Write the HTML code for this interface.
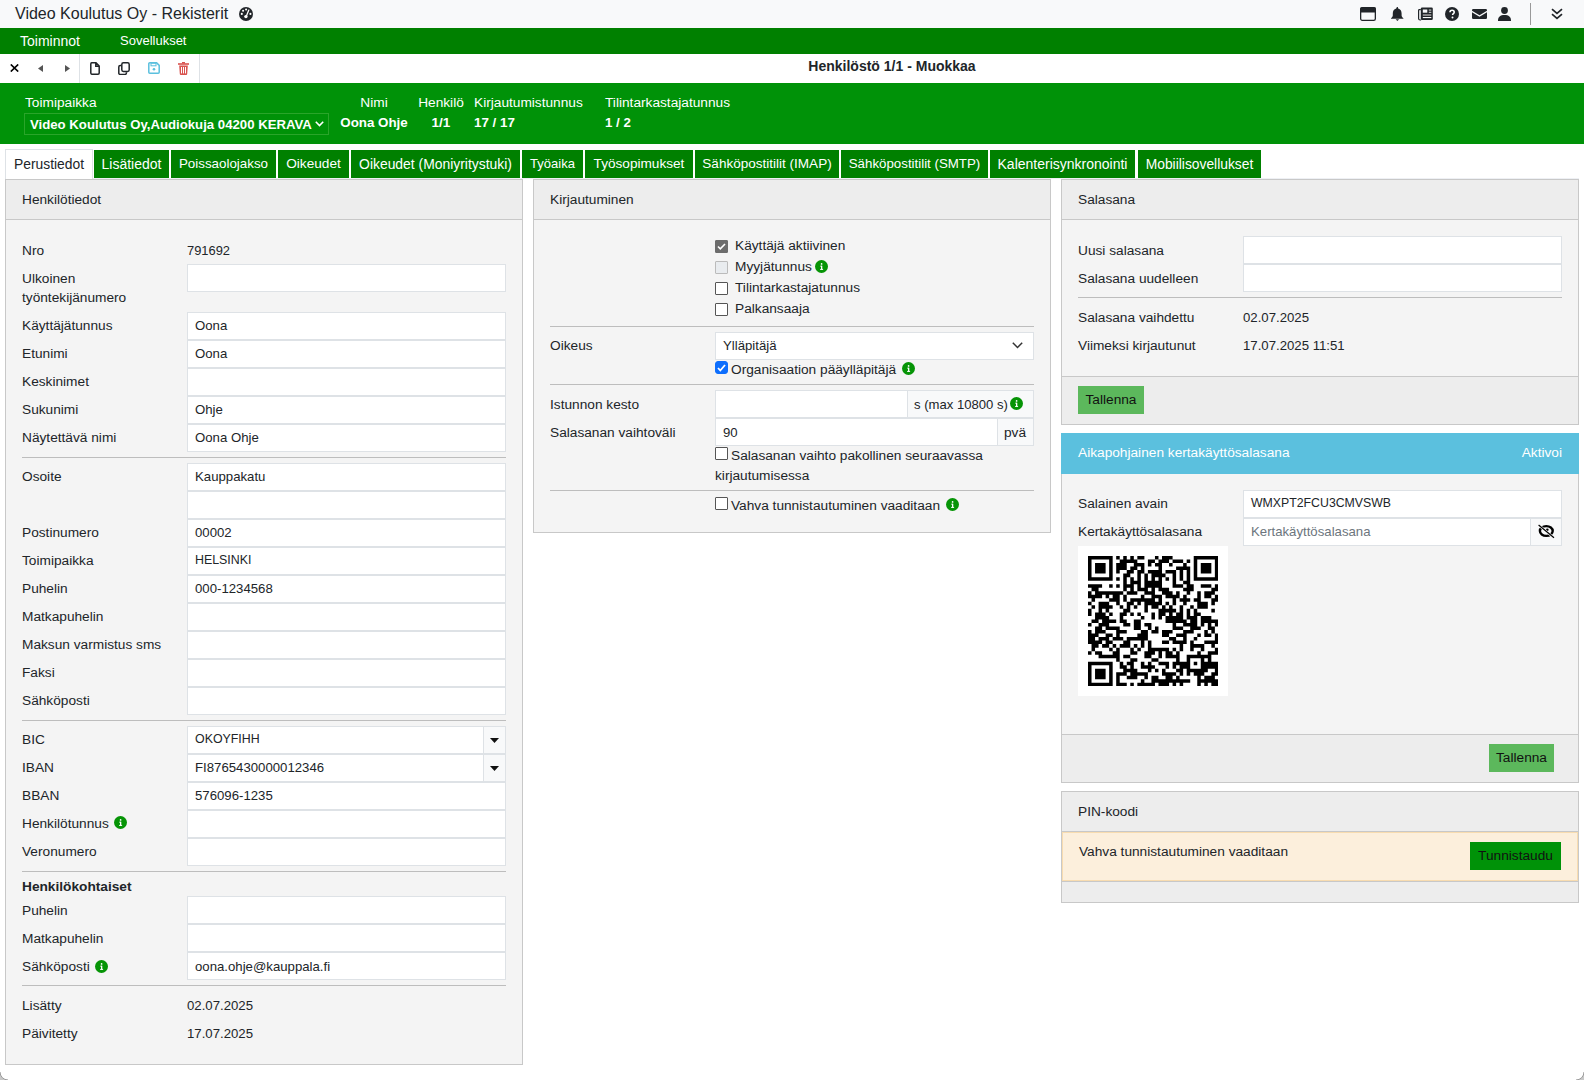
<!DOCTYPE html><html><head><meta charset="utf-8"><style>
*{box-sizing:border-box;margin:0;padding:0}
html,body{width:1584px;height:1080px;overflow:hidden;background:#fff}
body{position:relative;font-family:"Liberation Sans",sans-serif;font-size:13.7px;color:#212529}
.v{font-size:13.2px}
.ab{position:absolute}
.t{position:absolute;white-space:nowrap;line-height:19px}
.inp{position:absolute;background:#fff;border:1px solid #dee2e6;height:28px}
.hr{position:absolute;height:1px;background:#bdbdbd}
.panel{position:absolute;background:#f4f4f4;border:1px solid #c8c8c8}
.ph{position:absolute;left:0;right:0;top:0;height:40px;background:#ededed;border-bottom:1px solid #c8c8c8}
.tab{position:absolute;top:150px;height:28px;background:#008000;color:#fff;text-align:center;line-height:28px;white-space:nowrap}
.cb{position:absolute;width:13px;height:13px;border:1px solid #555;background:#fff;border-radius:1px}
.info{position:absolute;width:13px;height:13px}

</style></head><body>
<div class="ab" style="left:0;top:0;width:1584px;height:28px;background:#f8f9fa"></div>
<div class="t" style="left:15px;top:0;line-height:28px;font-size:16px">Video Koulutus Oy - Rekisterit</div>
<svg class="ab" style="left:239px;top:7px" width="14" height="14" viewBox="0 0 14 14">
<circle cx="7" cy="7" r="7" fill="#212529"/>
<circle cx="2.8" cy="6.9" r="1.05" fill="#fff"/><circle cx="4.1" cy="3.8" r="1.05" fill="#fff"/><circle cx="7.1" cy="2.5" r="1.05" fill="#fff"/><circle cx="11.4" cy="6.9" r="1.05" fill="#fff"/>
<path d="M9.8 3.1L7.4 9" stroke="#fff" stroke-width="1.3" stroke-linecap="round"/><circle cx="6.9" cy="9.6" r="1.7" fill="#fff"/>
</svg>
<svg class="ab" style="left:1360px;top:7px" width="16" height="14" viewBox="0 0 16 14">
<rect x="0.65" y="0.65" width="14.7" height="12.7" rx="1.6" fill="none" stroke="#212529" stroke-width="1.3"/><path d="M1.6 0.2h12.8a1.4 1.4 0 0 1 1.4 1.4V5.6H0.2V1.6A1.4 1.4 0 0 1 1.6 0.2z" fill="#212529"/></svg>
<svg class="ab" style="left:1391px;top:7px" width="13" height="14" viewBox="0 0 13 14">
<path d="M5.9 0.1h0.9l0.4 1.3c2.3 0.6 3.4 2.6 3.4 5v2.1c0 1.1 1 2 1.8 2.7v0.6H0v-0.6c0.8-0.7 1.8-1.6 1.8-2.7V6.4c0-2.4 1.1-4.4 3.4-5z" fill="#212529"/><path d="M4.6 12.2h3.5L6.35 14z" fill="#212529"/></svg>
<svg class="ab" style="left:1418px;top:7px" width="15" height="14" viewBox="0 0 15 14">
<rect x="2.8" y="0.4" width="12" height="12.6" rx="1.3" fill="#212529"/><path d="M2.8 2.6H1.4a0.8 0.8 0 0 0-0.8 0.8v8.1a1.5 1.5 0 0 0 1.5 1.5h1" fill="none" stroke="#212529" stroke-width="1.2"/>
<rect x="4.8" y="2.5" width="4.5" height="3.2" fill="#f8f9fa"/><rect x="10.8" y="2.6" width="2.5" height="0.9" fill="#f8f9fa"/><rect x="10.8" y="4.8" width="2.5" height="0.9" fill="#f8f9fa"/><rect x="4.8" y="7.1" width="8.5" height="1.9" fill="#8a8a8a"/><rect x="4.8" y="10" width="8.5" height="1.1" fill="#f8f9fa"/></svg>
<svg class="ab" style="left:1445px;top:7px" width="14" height="14" viewBox="0 0 14 14">
<circle cx="7" cy="7" r="7" fill="#212529"/><path d="M5 5.3c0-1.2 0.9-2 2.1-2 1.2 0 2.1 0.8 2.1 1.9 0 1.4-1.6 1.5-1.6 2.7v0.2" fill="none" stroke="#fff" stroke-width="1.6"/><circle cx="7.5" cy="10.4" r="1" fill="#fff"/></svg>
<svg class="ab" style="left:1472px;top:9px" width="15" height="10" viewBox="0 0 15 10">
<path d="M0 1.2A1.2 1.2 0 0 1 1.2 0h12.6A1.2 1.2 0 0 1 15 1.2v0.6L7.5 6.3 0 1.8z" fill="#212529"/><path d="M0 3.2l7.5 4.5 7.5-4.5v5.6A1.2 1.2 0 0 1 13.8 10H1.2A1.2 1.2 0 0 1 0 8.8z" fill="#212529"/></svg>
<svg class="ab" style="left:1498px;top:7px" width="13" height="14" viewBox="0 0 13 14">
<circle cx="6.5" cy="3.5" r="3.4" fill="#212529"/><path d="M0 13.2c0-3.3 2.2-5.3 6.5-5.3s6.5 2 6.5 5.3v0.8H0z" fill="#212529"/></svg>
<div class="ab" style="left:1530px;top:3px;width:1px;height:22px;background:#999"></div>
<svg class="ab" style="left:1551px;top:8px" width="12" height="12" viewBox="0 0 12 12">
<path d="M1 1.2l5 4.3 5-4.3M1 6.2l5 4.3 5-4.3" fill="none" stroke="#212529" stroke-width="1.7"/></svg>
<div class="ab" style="left:0;top:28px;width:1584px;height:26px;background:#008000"></div>
<div class="t" style="left:20px;top:28px;line-height:26px;color:#fff;font-size:14px">Toiminnot</div>
<div class="t" style="left:120px;top:28px;line-height:26px;color:#fff;font-size:13px">Sovellukset</div>
<div class="ab" style="left:79px;top:54px;width:1px;height:29px;background:#dee2e6"></div>
<div class="ab" style="left:199px;top:54px;width:1px;height:29px;background:#dee2e6"></div>
<svg class="ab" style="left:10px;top:64px" width="9" height="8" viewBox="0 0 9 8"><path d="M0.8 0.5L8.2 7.5M8.2 0.5L0.8 7.5" stroke="#000" stroke-width="1.7"/></svg>
<svg class="ab" style="left:38px;top:65px" width="5" height="7" viewBox="0 0 5 7"><path d="M5 0V7L0 3.5z" fill="#555"/></svg>
<svg class="ab" style="left:65px;top:65px" width="5" height="7" viewBox="0 0 5 7"><path d="M0 0V7L5 3.5z" fill="#555"/></svg>
<svg class="ab" style="left:90px;top:62px" width="10" height="13" viewBox="0 0 10 13"><path d="M1.8 0.8h4.2l3.2 3.2v7a1.2 1.2 0 0 1-1.2 1.2H1.8A1.2 1.2 0 0 1 0.8 11V2a1.2 1.2 0 0 1 1-1.2z M5.8 0.8v3.4h3.4" fill="none" stroke="#212529" stroke-width="1.5"/></svg>
<svg class="ab" style="left:118px;top:62px" width="12" height="13" viewBox="0 0 12 13"><rect x="3.8" y="0.8" width="7.4" height="8.6" rx="1.6" fill="none" stroke="#212529" stroke-width="1.5"/><path d="M3 3.6H2.2A1.4 1.4 0 0 0 0.8 5v6.2a1.2 1.2 0 0 0 1.2 1.2h5a1.4 1.4 0 0 0 1.4-1.4v-0.8" fill="none" stroke="#212529" stroke-width="1.5"/></svg>
<svg class="ab" style="left:148px;top:62px" width="12" height="12" viewBox="0 0 12 12"><path d="M1.8 0.8h6.8l2.6 2.6v6.8a1 1 0 0 1-1 1H1.8a1 1 0 0 1-1-1V1.8a1 1 0 0 1 1-1z" fill="none" stroke="#5bc0de" stroke-width="1.5"/><rect x="3" y="1.2" width="5" height="2.6" fill="none" stroke="#5bc0de" stroke-width="1"/><circle cx="6" cy="7.2" r="1.3" fill="#5bc0de"/></svg>
<svg class="ab" style="left:178px;top:62px" width="11" height="13" viewBox="0 0 11 13"><rect x="0" y="1.2" width="11" height="1.6" fill="#d9534f"/><rect x="4" y="0" width="3" height="1.5" fill="#d9534f"/><path d="M1.2 3.6h8.6l-0.6 8.4a1 1 0 0 1-1 0.9H2.8a1 1 0 0 1-1-0.9z" fill="#d9534f"/><rect x="3" y="5" width="1" height="6.4" fill="#fff"/><rect x="5" y="5" width="1" height="6.4" fill="#fff"/><rect x="7" y="5" width="1" height="6.4" fill="#fff"/></svg>
<div class="t" style="left:200px;width:1384px;top:53px;line-height:26px;text-align:center;font-weight:bold;color:#212529;font-size:14px">Henkilöstö 1/1 - Muokkaa</div>
<div class="ab" style="left:0;top:83px;width:1584px;height:61px;background:#009208"></div>
<div class="t" style="left:25px;top:93px;color:#fff">Toimipaikka</div>
<div class="ab" style="left:24px;top:113px;width:305px;height:22px;border:1px solid #2aa52a"></div>
<div class="t" style="left:30px;top:115px;color:#fff;font-weight:bold;font-size:13.2px">Video Koulutus Oy,Audiokuja 04200 KERAVA</div>
<svg class="ab" style="left:315px;top:121px" width="9" height="6" viewBox="0 0 9 6"><path d="M0.8 0.8l3.7 3.7 3.7-3.7" fill="none" stroke="#fff" stroke-width="1.6"/></svg>
<div class="t" style="left:340px;width:68px;text-align:center;top:93px;color:#fff">Nimi</div>
<div class="t" style="left:340px;width:68px;text-align:center;top:113px;color:#fff;font-weight:bold;font-size:13.35px">Oona Ohje</div>
<div class="t" style="left:418px;width:46px;text-align:center;top:93px;color:#fff">Henkilö</div>
<div class="t" style="left:418px;width:46px;text-align:center;top:113px;color:#fff;font-weight:bold;font-size:13.5px">1/1</div>
<div class="t" style="left:474px;top:93px;color:#fff">Kirjautumistunnus</div>
<div class="t" style="left:474px;top:113px;color:#fff;font-weight:bold;font-size:13.35px">17 / 17</div>
<div class="t" style="left:605px;top:93px;color:#fff">Tilintarkastajatunnus</div>
<div class="t" style="left:605px;top:113px;color:#fff;font-weight:bold;font-size:13.3px">1 / 2</div>
<div class="ab" style="left:5px;top:149px;width:88px;height:30px;background:#fff;border:1px solid #dee2e6;border-bottom:none"></div>
<div class="t" style="left:5px;width:88px;top:149px;line-height:30px;text-align:center;color:#212529;font-size:13.85px">Perustiedot</div>
<div class="tab" style="left:94px;width:75px;font-size:13.97px">Lisätiedot</div>
<div class="tab" style="left:171px;width:105px;font-size:13.37px">Poissaolojakso</div>
<div class="tab" style="left:278px;width:71px;font-size:13.64px">Oikeudet</div>
<div class="tab" style="left:351px;width:169px;font-size:13.9px">Oikeudet (Moniyritystuki)</div>
<div class="tab" style="left:522px;width:61px;font-size:13.0px">Työaika</div>
<div class="tab" style="left:585px;width:108px;font-size:13.61px">Työsopimukset</div>
<div class="tab" style="left:695px;width:144px;font-size:13.54px">Sähköpostitilit (IMAP)</div>
<div class="tab" style="left:841px;width:147px;font-size:13.31px">Sähköpostitilit (SMTP)</div>
<div class="tab" style="left:990px;width:145px;font-size:14.0px">Kalenterisynkronointi</div>
<div class="tab" style="left:1138px;width:123px;font-size:13.83px">Mobiilisovellukset</div>
<div class="ab" style="left:93px;top:178px;width:1486px;height:1px;background:#eef0f4"></div>
<div class="panel" style="left:5px;top:179px;width:518px;height:886px"><div class="ph" style=""></div></div>
<div class="t" style="left:22px;top:190px;line-height:20px">Henkilötiedot</div>
<div class="t" style="left:22px;top:241px;">Nro</div>
<div class="t" style="left:187px;top:241px;font-size:12.9px">791692</div>
<div class="t" style="left:22px;top:269px">Ulkoinen<br>työntekijänumero</div>
<div class="inp" style="left:187px;top:264px;width:319px;"></div>
<div class="t" style="left:22px;top:316px;">Käyttäjätunnus</div>
<div class="inp" style="left:187px;top:312px;width:319px;"></div>
<div class="t v" style="left:195px;top:316px;">Oona</div>
<div class="t" style="left:22px;top:344px;">Etunimi</div>
<div class="inp" style="left:187px;top:340px;width:319px;"></div>
<div class="t v" style="left:195px;top:344px;">Oona</div>
<div class="t" style="left:22px;top:372px;">Keskinimet</div>
<div class="inp" style="left:187px;top:368px;width:319px;"></div>
<div class="t" style="left:22px;top:400px;">Sukunimi</div>
<div class="inp" style="left:187px;top:396px;width:319px;"></div>
<div class="t v" style="left:195px;top:400px;">Ohje</div>
<div class="t" style="left:22px;top:428px;">Näytettävä nimi</div>
<div class="inp" style="left:187px;top:424px;width:319px;"></div>
<div class="t v" style="left:195px;top:428px;">Oona Ohje</div>
<div class="hr" style="left:22px;top:457px;width:484px"></div>
<div class="t" style="left:22px;top:467px;">Osoite</div>
<div class="inp" style="left:187px;top:463px;width:319px;"></div>
<div class="t v" style="left:195px;top:467px;">Kauppakatu</div>
<div class="inp" style="left:187px;top:491px;width:319px;"></div>
<div class="t" style="left:22px;top:523px;">Postinumero</div>
<div class="inp" style="left:187px;top:519px;width:319px;"></div>
<div class="t v" style="left:195px;top:523px;">00002</div>
<div class="t" style="left:22px;top:551px;">Toimipaikka</div>
<div class="inp" style="left:187px;top:547px;width:319px;"></div>
<div class="t v" style="left:195px;top:551px;font-size:12.4px">HELSINKI</div>
<div class="t" style="left:22px;top:579px;">Puhelin</div>
<div class="inp" style="left:187px;top:575px;width:319px;"></div>
<div class="t v" style="left:195px;top:579px;">000-1234568</div>
<div class="t" style="left:22px;top:607px;">Matkapuhelin</div>
<div class="inp" style="left:187px;top:603px;width:319px;"></div>
<div class="t" style="left:22px;top:635px;">Maksun varmistus sms</div>
<div class="inp" style="left:187px;top:631px;width:319px;"></div>
<div class="t" style="left:22px;top:663px;">Faksi</div>
<div class="inp" style="left:187px;top:659px;width:319px;"></div>
<div class="t" style="left:22px;top:691px;">Sähköposti</div>
<div class="inp" style="left:187px;top:687px;width:319px;"></div>
<div class="hr" style="left:22px;top:720px;width:484px"></div>
<div class="t" style="left:22px;top:730px;">BIC</div>
<div class="inp" style="left:187px;top:726px;width:319px;"></div>
<div class="t v" style="left:195px;top:730px;font-size:12.4px">OKOYFIHH</div>
<div class="ab" style="left:483px;top:726px;width:23px;height:28px;background:#f8f9fa;border:1px solid #dee2e6"></div>
<svg class="ab" style="left:490px;top:738px" width="9" height="5" viewBox="0 0 9 5"><path d="M0 0h9L4.5 5z" fill="#111"/></svg>
<div class="t" style="left:22px;top:758px;">IBAN</div>
<div class="inp" style="left:187px;top:754px;width:319px;"></div>
<div class="t v" style="left:195px;top:758px;">FI8765430000012346</div>
<div class="ab" style="left:483px;top:754px;width:23px;height:28px;background:#f8f9fa;border:1px solid #dee2e6"></div>
<svg class="ab" style="left:490px;top:766px" width="9" height="5" viewBox="0 0 9 5"><path d="M0 0h9L4.5 5z" fill="#111"/></svg>
<div class="t" style="left:22px;top:786px;">BBAN</div>
<div class="inp" style="left:187px;top:782px;width:319px;"></div>
<div class="t v" style="left:195px;top:786px;">576096-1235</div>
<div class="t" style="left:22px;top:814px;">Henkilötunnus</div>
<svg class="info" style="left:114px;top:816px" viewBox="0 0 13 13"><circle cx="6.5" cy="6.5" r="6.5" fill="#069406"/><rect x="6" y="5.7" width="1.3" height="3.8" fill="#fff"/><rect x="5.2" y="5.7" width="1.4" height="0.9" fill="#fff"/><rect x="5.1" y="8.9" width="3" height="1" fill="#fff"/><circle cx="6.6" cy="3.9" r="0.85" fill="#fff"/></svg>
<div class="inp" style="left:187px;top:810px;width:319px;"></div>
<div class="t" style="left:22px;top:842px;">Veronumero</div>
<div class="inp" style="left:187px;top:838px;width:319px;"></div>
<div class="hr" style="left:22px;top:871px;width:484px"></div>
<div class="t" style="left:22px;top:877px;font-weight:bold">Henkilökohtaiset</div>
<div class="t" style="left:22px;top:901px;">Puhelin</div>
<div class="inp" style="left:187px;top:896px;width:319px;"></div>
<div class="t" style="left:22px;top:929px;">Matkapuhelin</div>
<div class="inp" style="left:187px;top:924px;width:319px;"></div>
<div class="t" style="left:22px;top:957px;">Sähköposti</div>
<svg class="info" style="left:95px;top:960px" viewBox="0 0 13 13"><circle cx="6.5" cy="6.5" r="6.5" fill="#069406"/><rect x="6" y="5.7" width="1.3" height="3.8" fill="#fff"/><rect x="5.2" y="5.7" width="1.4" height="0.9" fill="#fff"/><rect x="5.1" y="8.9" width="3" height="1" fill="#fff"/><circle cx="6.6" cy="3.9" r="0.85" fill="#fff"/></svg>
<div class="inp" style="left:187px;top:952px;width:319px;"></div>
<div class="t v" style="left:195px;top:957px;">oona.ohje@kauppala.fi</div>
<div class="hr" style="left:22px;top:985px;width:484px"></div>
<div class="t" style="left:22px;top:996px;">Lisätty</div>
<div class="t" style="left:187px;top:996px;font-size:13.2px">02.07.2025</div>
<div class="t" style="left:22px;top:1024px;">Päivitetty</div>
<div class="t" style="left:187px;top:1024px;font-size:13.2px">17.07.2025</div>
<div class="panel" style="left:533px;top:179px;width:518px;height:354px"><div class="ph" style=""></div></div>
<div class="t" style="left:550px;top:190px;line-height:20px">Kirjautuminen</div>
<div class="cb" style="left:715px;top:240px;background:#6c6c6c;border-color:#6c6c6c"></div>
<svg class="ab" style="left:717px;top:243px" width="9" height="7" viewBox="0 0 9 7"><path d="M1 3.5l2.3 2.3L8 1" fill="none" stroke="#fff" stroke-width="1.6"/></svg>
<div class="t" style="left:735px;top:235px;line-height:21px">Käyttäjä aktiivinen</div>
<div class="cb" style="left:715px;top:261px;background:#e9ecef;border-color:#bbb"></div>
<div class="t" style="left:735px;top:256px;line-height:21px">Myyjätunnus</div>
<svg class="info" style="left:815px;top:260px" viewBox="0 0 13 13"><circle cx="6.5" cy="6.5" r="6.5" fill="#069406"/><rect x="6" y="5.7" width="1.3" height="3.8" fill="#fff"/><rect x="5.2" y="5.7" width="1.4" height="0.9" fill="#fff"/><rect x="5.1" y="8.9" width="3" height="1" fill="#fff"/><circle cx="6.6" cy="3.9" r="0.85" fill="#fff"/></svg>
<div class="cb" style="left:715px;top:282px"></div>
<div class="t" style="left:735px;top:277px;line-height:21px">Tilintarkastajatunnus</div>
<div class="cb" style="left:715px;top:303px"></div>
<div class="t" style="left:735px;top:298px;line-height:21px">Palkansaaja</div>
<div class="hr" style="left:550px;top:326px;width:484px"></div>
<div class="t" style="left:550px;top:336px;">Oikeus</div>
<div class="inp" style="left:715px;top:332px;width:319px;"></div>
<div class="t v" style="left:723px;top:336px;">Ylläpitäjä</div>
<svg class="ab" style="left:1012px;top:342px" width="11" height="7" viewBox="0 0 11 7"><path d="M0.8 0.8l4.7 4.7 4.7-4.7" fill="none" stroke="#333" stroke-width="1.5"/></svg>
<div class="cb" style="left:715px;top:361px;background:#0d6efd;border-color:#0d6efd;border-radius:3px"></div>
<svg class="ab" style="left:717px;top:364px" width="9" height="8" viewBox="0 0 9 8"><path d="M1 4l2.3 2.5L8 1" fill="none" stroke="#fff" stroke-width="1.8"/></svg>
<div class="t" style="left:731px;top:360px">Organisaation pääylläpitäjä</div>
<svg class="info" style="left:902px;top:362px" viewBox="0 0 13 13"><circle cx="6.5" cy="6.5" r="6.5" fill="#069406"/><rect x="6" y="5.7" width="1.3" height="3.8" fill="#fff"/><rect x="5.2" y="5.7" width="1.4" height="0.9" fill="#fff"/><rect x="5.1" y="8.9" width="3" height="1" fill="#fff"/><circle cx="6.6" cy="3.9" r="0.85" fill="#fff"/></svg>
<div class="hr" style="left:550px;top:384px;width:484px"></div>
<div class="t" style="left:550px;top:395px;">Istunnon kesto</div>
<div class="inp" style="left:715px;top:390px;width:319px;"></div>
<div class="ab" style="left:907px;top:390px;width:127px;height:28px;background:#f8f9fa;border:1px solid #dee2e6"></div>
<div class="t" style="left:914px;top:395px;font-size:13.1px">s (max 10800 s)</div>
<svg class="info" style="left:1010px;top:397px" viewBox="0 0 13 13"><circle cx="6.5" cy="6.5" r="6.5" fill="#069406"/><rect x="6" y="5.7" width="1.3" height="3.8" fill="#fff"/><rect x="5.2" y="5.7" width="1.4" height="0.9" fill="#fff"/><rect x="5.1" y="8.9" width="3" height="1" fill="#fff"/><circle cx="6.6" cy="3.9" r="0.85" fill="#fff"/></svg>
<div class="t" style="left:550px;top:423px;">Salasanan vaihtoväli</div>
<div class="inp" style="left:715px;top:418px;width:319px;"></div>
<div class="t v" style="left:723px;top:423px;">90</div>
<div class="ab" style="left:997px;top:418px;width:37px;height:28px;background:#f8f9fa;border:1px solid #dee2e6"></div>
<div class="t" style="left:1004px;top:423px">pvä</div>
<div class="cb" style="left:715px;top:447px"></div>
<div class="t" style="left:731px;top:446px;line-height:20px">Salasanan vaihto pakollinen seuraavassa</div>
<div class="t" style="left:715px;top:466px;line-height:20px">kirjautumisessa</div>
<div class="hr" style="left:550px;top:490px;width:484px"></div>
<div class="cb" style="left:715px;top:497px"></div>
<div class="t" style="left:731px;top:496px;line-height:20px">Vahva tunnistautuminen vaaditaan</div>
<svg class="info" style="left:946px;top:498px" viewBox="0 0 13 13"><circle cx="6.5" cy="6.5" r="6.5" fill="#069406"/><rect x="6" y="5.7" width="1.3" height="3.8" fill="#fff"/><rect x="5.2" y="5.7" width="1.4" height="0.9" fill="#fff"/><rect x="5.1" y="8.9" width="3" height="1" fill="#fff"/><circle cx="6.6" cy="3.9" r="0.85" fill="#fff"/></svg>
<div class="panel" style="left:1061px;top:179px;width:518px;height:246px"><div class="ph" style=""></div></div>
<div class="t" style="left:1078px;top:190px;line-height:20px">Salasana</div>
<div class="t" style="left:1078px;top:241px;">Uusi salasana</div>
<div class="inp" style="left:1243px;top:236px;width:319px;"></div>
<div class="t" style="left:1078px;top:269px;">Salasana uudelleen</div>
<div class="inp" style="left:1243px;top:264px;width:319px;"></div>
<div class="hr" style="left:1078px;top:297px;width:484px"></div>
<div class="t" style="left:1078px;top:308px;">Salasana vaihdettu</div>
<div class="t" style="left:1243px;top:308px;font-size:13.2px">02.07.2025</div>
<div class="t" style="left:1078px;top:336px;">Viimeksi kirjautunut</div>
<div class="t" style="left:1243px;top:336px;font-size:13.2px">17.07.2025 11:51</div>
<div class="ab" style="left:1062px;top:376px;width:516px;height:48px;background:#ededed;border-top:1px solid #c8c8c8"></div>
<div class="ab" style="left:1078px;top:386px;width:66px;height:28px;background:#5cb85c"></div>
<div class="t" style="left:1078px;width:66px;text-align:center;top:386px;line-height:28px;color:#111">Tallenna</div>
<div class="panel" style="left:1061px;top:433px;width:518px;height:350px"><div class="ph" style="background:#5bc0de;border-bottom:1px solid #5bc0de"></div></div>
<div class="ab" style="left:1061px;top:433px;width:518px;height:41px;background:#5bc0de"></div>
<div class="t" style="left:1078px;top:443px;line-height:20px;color:#fff">Aikapohjainen kertakäyttösalasana</div>
<div class="t" style="left:1400px;width:162px;text-align:right;top:443px;line-height:20px;color:#fff">Aktivoi</div>
<div class="t" style="left:1078px;top:494px;">Salainen avain</div>
<div class="inp" style="left:1243px;top:490px;width:319px;"></div>
<div class="t v" style="left:1251px;top:494px;font-size:12.3px">WMXPT2FCU3CMVSWB</div>
<div class="t" style="left:1078px;top:522px;">Kertakäyttösalasana</div>
<div class="inp" style="left:1243px;top:518px;width:319px;"></div>
<div class="t v" style="left:1251px;top:522px;color:#6c757d">Kertakäyttösalasana</div>
<div class="ab" style="left:1530px;top:518px;width:32px;height:28px;background:#f8f9fa;border:1px solid #dee2e6"></div>
<svg class="ab" style="left:1537px;top:524px" width="18" height="15" viewBox="0 0 18 15"><ellipse cx="9.3" cy="7" rx="6.4" ry="4.9" fill="none" stroke="#000" stroke-width="2.4"/><circle cx="10.3" cy="5.8" r="1.3" fill="#000"/><path d="M1.6 1L17 13.8" stroke="#f8f9fa" stroke-width="2.4"/><path d="M1.6 1L17 13.8" stroke="#000" stroke-width="1.2"/></svg>
<div class="ab" style="left:1078px;top:546px;width:150px;height:150px;background:#fff"></div>
<svg class="ab" style="left:1087.8px;top:555.5px" width="130.4" height="130.4" viewBox="0 0 37 37"><path d="M0 0h7v1h-7zM8 0h1v1h-1zM10 0h1v1h-1zM12 0h1v1h-1zM14 0h2v1h-2zM19 0h1v1h-1zM21 0h3v1h-3zM30 0h7v1h-7zM0 1h1v1h-1zM6 1h1v1h-1zM9 1h5v1h-5zM17 1h2v1h-2zM20 1h3v1h-3zM24 1h3v1h-3zM28 1h1v1h-1zM30 1h1v1h-1zM36 1h1v1h-1zM0 2h1v1h-1zM2 2h3v1h-3zM6 2h1v1h-1zM8 2h3v1h-3zM13 2h3v1h-3zM17 2h1v1h-1zM19 2h2v1h-2zM23 2h1v1h-1zM27 2h1v1h-1zM30 2h1v1h-1zM32 2h3v1h-3zM36 2h1v1h-1zM0 3h1v1h-1zM2 3h3v1h-3zM6 3h1v1h-1zM8 3h3v1h-3zM12 3h2v1h-2zM15 3h1v1h-1zM20 3h1v1h-1zM25 3h4v1h-4zM30 3h1v1h-1zM32 3h3v1h-3zM36 3h1v1h-1zM0 4h1v1h-1zM2 4h3v1h-3zM6 4h1v1h-1zM8 4h1v1h-1zM11 4h2v1h-2zM14 4h2v1h-2zM17 4h4v1h-4zM22 4h3v1h-3zM26 4h1v1h-1zM28 4h1v1h-1zM30 4h1v1h-1zM32 4h3v1h-3zM36 4h1v1h-1zM0 5h1v1h-1zM6 5h1v1h-1zM10 5h2v1h-2zM14 5h1v1h-1zM16 5h1v1h-1zM18 5h4v1h-4zM24 5h1v1h-1zM26 5h1v1h-1zM28 5h1v1h-1zM30 5h1v1h-1zM36 5h1v1h-1zM0 6h7v1h-7zM8 6h1v1h-1zM10 6h1v1h-1zM12 6h1v1h-1zM14 6h1v1h-1zM16 6h1v1h-1zM18 6h1v1h-1zM20 6h1v1h-1zM22 6h1v1h-1zM24 6h1v1h-1zM26 6h1v1h-1zM28 6h1v1h-1zM30 6h7v1h-7zM10 7h1v1h-1zM12 7h3v1h-3zM16 7h5v1h-5zM24 7h1v1h-1zM27 7h2v1h-2zM0 8h4v1h-4zM6 8h1v1h-1zM8 8h1v1h-1zM10 8h3v1h-3zM14 8h1v1h-1zM16 8h5v1h-5zM24 8h3v1h-3zM28 8h2v1h-2zM32 8h3v1h-3zM36 8h1v1h-1zM1 9h2v1h-2zM10 9h1v1h-1zM12 9h1v1h-1zM14 9h3v1h-3zM18 9h1v1h-1zM20 9h3v1h-3zM27 9h3v1h-3zM35 9h2v1h-2zM0 10h1v1h-1zM2 10h8v1h-8zM11 10h3v1h-3zM16 10h3v1h-3zM21 10h3v1h-3zM25 10h1v1h-1zM28 10h1v1h-1zM31 10h1v1h-1zM33 10h3v1h-3zM0 11h4v1h-4zM5 11h1v1h-1zM7 11h2v1h-2zM10 11h1v1h-1zM15 11h1v1h-1zM18 11h3v1h-3zM22 11h4v1h-4zM27 11h1v1h-1zM31 11h1v1h-1zM33 11h2v1h-2zM36 11h1v1h-1zM1 12h1v1h-1zM6 12h3v1h-3zM10 12h1v1h-1zM12 12h7v1h-7zM20 12h1v1h-1zM24 12h1v1h-1zM26 12h3v1h-3zM30 12h2v1h-2zM35 12h2v1h-2zM0 13h1v1h-1zM3 13h3v1h-3zM8 13h1v1h-1zM11 13h2v1h-2zM14 13h1v1h-1zM16 13h5v1h-5zM22 13h1v1h-1zM24 13h1v1h-1zM27 13h1v1h-1zM31 13h3v1h-3zM35 13h1v1h-1zM1 14h1v1h-1zM3 14h4v1h-4zM9 14h1v1h-1zM11 14h1v1h-1zM13 14h1v1h-1zM16 14h1v1h-1zM18 14h2v1h-2zM21 14h1v1h-1zM23 14h1v1h-1zM26 14h1v1h-1zM29 14h1v1h-1zM31 14h3v1h-3zM0 15h1v1h-1zM3 15h1v1h-1zM5 15h1v1h-1zM10 15h2v1h-2zM16 15h1v1h-1zM20 15h5v1h-5zM26 15h1v1h-1zM28 15h1v1h-1zM30 15h1v1h-1zM35 15h1v1h-1zM0 16h1v1h-1zM2 16h3v1h-3zM6 16h1v1h-1zM9 16h2v1h-2zM12 16h1v1h-1zM14 16h1v1h-1zM18 16h1v1h-1zM20 16h2v1h-2zM23 16h1v1h-1zM25 16h2v1h-2zM28 16h1v1h-1zM30 16h2v1h-2zM2 17h4v1h-4zM9 17h1v1h-1zM15 17h1v1h-1zM18 17h1v1h-1zM20 17h1v1h-1zM22 17h5v1h-5zM28 17h3v1h-3zM32 17h3v1h-3zM1 18h2v1h-2zM4 18h4v1h-4zM9 18h2v1h-2zM13 18h2v1h-2zM22 18h6v1h-6zM29 18h2v1h-2zM32 18h5v1h-5zM0 19h1v1h-1zM3 19h3v1h-3zM10 19h2v1h-2zM13 19h2v1h-2zM16 19h2v1h-2zM24 19h1v1h-1zM27 19h4v1h-4zM32 19h1v1h-1zM34 19h1v1h-1zM36 19h1v1h-1zM2 20h2v1h-2zM5 20h4v1h-4zM13 20h2v1h-2zM17 20h1v1h-1zM19 20h1v1h-1zM24 20h3v1h-3zM29 20h3v1h-3zM34 20h2v1h-2zM0 21h1v1h-1zM2 21h3v1h-3zM8 21h3v1h-3zM15 21h2v1h-2zM18 21h2v1h-2zM21 21h3v1h-3zM27 21h3v1h-3zM33 21h1v1h-1zM35 21h1v1h-1zM0 22h3v1h-3zM5 22h2v1h-2zM8 22h1v1h-1zM14 22h3v1h-3zM21 22h2v1h-2zM25 22h3v1h-3zM31 22h1v1h-1zM33 22h2v1h-2zM36 22h1v1h-1zM0 23h2v1h-2zM3 23h3v1h-3zM7 23h3v1h-3zM11 23h6v1h-6zM23 23h2v1h-2zM27 23h1v1h-1zM30 23h1v1h-1zM36 23h1v1h-1zM0 24h4v1h-4zM5 24h2v1h-2zM10 24h2v1h-2zM15 24h1v1h-1zM17 24h1v1h-1zM21 24h2v1h-2zM24 24h4v1h-4zM29 24h1v1h-1zM33 24h4v1h-4zM1 25h2v1h-2zM4 25h2v1h-2zM7 25h1v1h-1zM9 25h3v1h-3zM13 25h1v1h-1zM15 25h1v1h-1zM17 25h1v1h-1zM26 25h1v1h-1zM29 25h4v1h-4zM35 25h1v1h-1zM1 26h1v1h-1zM6 26h1v1h-1zM8 26h1v1h-1zM12 26h1v1h-1zM14 26h1v1h-1zM17 26h6v1h-6zM24 26h1v1h-1zM26 26h1v1h-1zM29 26h1v1h-1zM32 26h1v1h-1zM36 26h1v1h-1zM0 27h1v1h-1zM2 27h2v1h-2zM7 27h2v1h-2zM12 27h2v1h-2zM16 27h3v1h-3zM20 27h1v1h-1zM22 27h2v1h-2zM25 27h1v1h-1zM31 27h1v1h-1zM34 27h3v1h-3zM3 28h6v1h-6zM10 28h2v1h-2zM16 28h2v1h-2zM20 28h1v1h-1zM22 28h4v1h-4zM28 28h7v1h-7zM8 29h1v1h-1zM12 29h2v1h-2zM18 29h2v1h-2zM25 29h1v1h-1zM28 29h1v1h-1zM32 29h1v1h-1zM34 29h1v1h-1zM0 30h7v1h-7zM9 30h1v1h-1zM11 30h2v1h-2zM15 30h1v1h-1zM17 30h1v1h-1zM20 30h3v1h-3zM24 30h5v1h-5zM30 30h1v1h-1zM32 30h5v1h-5zM0 31h1v1h-1zM6 31h1v1h-1zM9 31h2v1h-2zM12 31h1v1h-1zM15 31h4v1h-4zM22 31h1v1h-1zM24 31h1v1h-1zM26 31h3v1h-3zM32 31h5v1h-5zM0 32h1v1h-1zM2 32h3v1h-3zM6 32h1v1h-1zM10 32h4v1h-4zM17 32h1v1h-1zM19 32h1v1h-1zM21 32h1v1h-1zM25 32h2v1h-2zM28 32h6v1h-6zM36 32h1v1h-1zM0 33h1v1h-1zM2 33h3v1h-3zM6 33h1v1h-1zM8 33h3v1h-3zM12 33h5v1h-5zM21 33h4v1h-4zM26 33h1v1h-1zM28 33h1v1h-1zM30 33h3v1h-3zM35 33h2v1h-2zM0 34h1v1h-1zM2 34h3v1h-3zM6 34h1v1h-1zM8 34h1v1h-1zM11 34h3v1h-3zM16 34h1v1h-1zM18 34h2v1h-2zM22 34h2v1h-2zM25 34h1v1h-1zM31 34h1v1h-1zM33 34h3v1h-3zM0 35h1v1h-1zM6 35h1v1h-1zM8 35h1v1h-1zM15 35h1v1h-1zM18 35h11v1h-11zM31 35h6v1h-6zM0 36h7v1h-7zM8 36h3v1h-3zM12 36h1v1h-1zM14 36h5v1h-5zM20 36h3v1h-3zM24 36h1v1h-1zM26 36h1v1h-1zM31 36h1v1h-1zM33 36h1v1h-1zM35 36h2v1h-2z" fill="#000"/></svg>
<div class="ab" style="left:1062px;top:734px;width:516px;height:48px;background:#ededed;border-top:1px solid #c8c8c8"></div>
<div class="ab" style="left:1489px;top:744px;width:65px;height:28px;background:#5cb85c"></div>
<div class="t" style="left:1489px;width:65px;text-align:center;top:744px;line-height:28px;color:#111">Tallenna</div>
<div class="panel" style="left:1061px;top:791px;width:518px;height:112px"><div class="ph" style=""></div></div>
<div class="t" style="left:1078px;top:802px;line-height:20px">PIN-koodi</div>
<div class="ab" style="left:1062px;top:881px;width:516px;height:21px;background:#ededed;border-top:1px solid #c8c8c8"></div>
<div class="ab" style="left:1062px;top:832px;width:516px;height:49px;background:#fcefdc;border:1px solid #f8dcb0"></div>
<div class="t" style="left:1079px;top:842px">Vahva tunnistautuminen vaaditaan</div>
<div class="ab" style="left:1470px;top:842px;width:91px;height:28px;background:#009208"></div>
<div class="t" style="left:1470px;width:91px;text-align:center;top:842px;line-height:28px;color:#111">Tunnistaudu</div>
<svg class="ab" style="left:0;top:1072px" width="8" height="8" viewBox="0 0 8 8"><path d="M0 0A8 8 0 0 0 8 8H0z" fill="#c8c8c8"/><path d="M0 0A8 8 0 0 0 8 8" fill="none" stroke="#9a9a9a" stroke-width="1"/></svg>
<svg class="ab" style="left:1576px;top:1072px" width="8" height="8" viewBox="0 0 8 8"><path d="M8 0A8 8 0 0 1 0 8H8z" fill="#c8c8c8"/><path d="M8 0A8 8 0 0 1 0 8" fill="none" stroke="#9a9a9a" stroke-width="1"/></svg>
</body></html>
